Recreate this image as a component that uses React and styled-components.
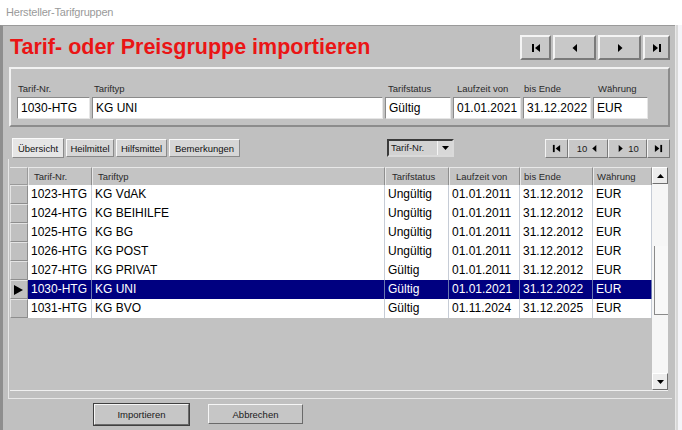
import React from "react";
import styled, { createGlobalStyle } from "styled-components";

const GlobalStyle = createGlobalStyle`
  html, body {
    margin: 0;
    padding: 0;
    background: #ffffff;
    font-family: "Liberation Sans", Arial, sans-serif;
  }
`;

const rows = [
  ["1023-HTG", "KG VdAK", "Ungültig", "01.01.2011", "31.12.2012", "EUR"],
  ["1024-HTG", "KG BEIHILFE", "Ungültig", "01.01.2011", "31.12.2012", "EUR"],
  ["1025-HTG", "KG BG", "Ungültig", "01.01.2011", "31.12.2012", "EUR"],
  ["1026-HTG", "KG POST", "Ungültig", "01.01.2011", "31.12.2012", "EUR"],
  ["1027-HTG", "KG PRIVAT", "Gültig", "01.01.2011", "31.12.2012", "EUR"],
  ["1030-HTG", "KG UNI", "Gültig", "01.01.2021", "31.12.2022", "EUR"],
  ["1031-HTG", "KG BVO", "Gültig", "01.11.2024", "31.12.2025", "EUR"],
];

const columns = [
  { title: "Tarif-Nr.", pad: 5 },
  { title: "Tariftyp", pad: 5 },
  { title: "Tarifstatus", pad: 6 },
  { title: "Laufzeit von", pad: 6 },
  { title: "bis Ende", pad: 3 },
  { title: "Währung", pad: 3 },
];

const header = [
  { label: "Tarif-Nr.", value: "1030-HTG", w: 73, lp: 1 },
  { label: "Tariftyp", value: "KG UNI", w: 291, lp: 2 },
  { label: "Tarifstatus", value: "Gültig", w: 66, lp: 3 },
  { label: "Laufzeit von", value: "01.01.2021", w: 68, lp: 4 },
  { label: "bis Ende", value: "31.12.2022", w: 68, lp: 1 },
  { label: "Währung", value: "EUR", w: 55, lp: 5 },
];

const gridCols = "18px 64px 293px 64px 71px 73px 59px";

const First = ({ s = 10 }) => (
  <svg width={s} height={s} viewBox="0 0 10 10">
    <rect x="1" y="1" width="2" height="8" fill="#000" />
    <polygon points="9,1 9,9 4,5" fill="#000" />
  </svg>
);
const Prev = ({ s = 10 }) => (
  <svg width={s} height={s} viewBox="0 0 10 10">
    <polygon points="7,1 7,9 2.5,5" fill="#000" />
  </svg>
);
const Next = ({ s = 10 }) => (
  <svg width={s} height={s} viewBox="0 0 10 10">
    <polygon points="3,1 3,9 7.5,5" fill="#000" />
  </svg>
);
const Last = ({ s = 10 }) => (
  <svg width={s} height={s} viewBox="0 0 10 10">
    <polygon points="1,1 1,9 6,5" fill="#000" />
    <rect x="7" y="1" width="2" height="8" fill="#000" />
  </svg>
);

export default function App() {
  return (
    <>
      <GlobalStyle />
      <TitleBar>Hersteller-Tarifgruppen</TitleBar>
      <Outer>
        <Frame>
          <HeaderRow>
            <BigTitle>Tarif- oder Preisgruppe importieren</BigTitle>
            <NavGroup>
              <NavButton $w={31}><First /></NavButton>
              <NavButton $w={43}><Prev /></NavButton>
              <NavButton $w={43}><Next /></NavButton>
              <NavButton $w={27}><Last /></NavButton>
            </NavGroup>
          </HeaderRow>

          <Panel>
            {header.map((f) => (
              <FieldCol key={f.label} $w={f.w}>
                <FieldLabel $lp={f.lp}>{f.label}</FieldLabel>
                <Field>{f.value}</Field>
              </FieldCol>
            ))}
          </Panel>

          <Toolbar>
            <Tabs>
              <Tab $active $w={52}>Übersicht</Tab>
              <Tab $w={48}>Heilmittel</Tab>
              <Tab $w={51}>Hilfsmittel</Tab>
              <Tab $w={71}>Bemerkungen</Tab>
            </Tabs>
            <Combo>
              <ComboText>Tarif-Nr.</ComboText>
              <ComboArrow>
                <svg width="7" height="4" viewBox="0 0 7 4">
                  <polygon points="0,0 7,0 3.5,4" fill="#000" />
                </svg>
              </ComboArrow>
            </Combo>
            <Pager>
              <PagerButton $w={23}><First s={9} /></PagerButton>
              <PagerButton $w={40}>
                <PagerNum>10</PagerNum>
                <Prev s={9} />
              </PagerButton>
              <PagerButton $w={39}>
                <Next s={9} />
                <PagerNum>10</PagerNum>
              </PagerButton>
              <PagerButton $w={23}><Last s={9} /></PagerButton>
            </Pager>
          </Toolbar>

          <TabPage>
            <Grid>
              <GridMain>
                <HeadRow>
                  <SelectorHead />
                  {columns.map((c) => (
                    <HeadCell key={c.title} $pad={c.pad}>
                      {c.title}
                    </HeadCell>
                  ))}
                </HeadRow>
                {rows.map((r) => {
                  const sel = r[0] === "1030-HTG";
                  return (
                    <DataRow key={r[0]} $sel={sel}>
                      <Selector>
                        {sel && (
                          <svg width="9" height="10" viewBox="0 0 9 10">
                            <polygon points="0,0 9,5 0,10" fill="#000" />
                          </svg>
                        )}
                      </Selector>
                      {r.map((v, i) => (
                        <Cell key={i} $sel={sel}>
                          {v}
                        </Cell>
                      ))}
                    </DataRow>
                  );
                })}
              </GridMain>
              <ScrollBar>
                <ScrollButton>
                  <svg width="7" height="4" viewBox="0 0 7 4">
                    <polygon points="0,4 7,4 3.5,0" fill="#000" />
                  </svg>
                </ScrollButton>
                <Track>
                  <Thumb />
                </Track>
                <ScrollButton>
                  <svg width="7" height="4" viewBox="0 0 7 4">
                    <polygon points="0,0 7,0 3.5,4" fill="#000" />
                  </svg>
                </ScrollButton>
              </ScrollBar>
            </Grid>
          </TabPage>

          <Footer>
            <Button $default>Importieren</Button>
            <Button>Abbrechen</Button>
          </Footer>
        </Frame>
        <Edge />
      </Outer>
    </>
  );
}

const TitleBar = styled.div`
  height: 25px;
  box-sizing: border-box;
  padding: 6px 0 0 6px;
  font-size: 11px;
  letter-spacing: -0.2px;
  color: #9a9a9a;
  background: #ffffff;
`;

const Outer = styled.div`
  display: flex;
  height: 405px;
`;

const Frame = styled.div`
  width: 675px;
  height: 405px;
  box-sizing: border-box;
  border-left: 3px solid #8e8e8e;
  border-top: 1px solid #9a9a9a;
  background: #c0c0c0;
  display: flex;
  flex-direction: column;
`;

const Edge = styled.div`
  flex: 1;
  border-left: 1px solid #e8e8e8;
  background: linear-gradient(90deg, #d8d8d8 0 2px, #f4f4f8 2px);
`;

const HeaderRow = styled.div`
  display: flex;
  justify-content: space-between;
  padding: 9px 5px 0 7px;
  height: 41px;
  box-sizing: border-box;
`;

const BigTitle = styled.h1`
  margin: 0;
  font-size: 21.5px;
  line-height: 25px;
  font-weight: bold;
  color: #ea1515;
`;

const NavGroup = styled.div`
  display: flex;
  gap: 2px;
  height: 25px;
`;

const NavButton = styled.div`
  width: ${(p) => p.$w}px;
  box-sizing: border-box;
  display: flex;
  align-items: center;
  justify-content: center;
  background: #c8c8c8;
  border: 2px solid;
  border-color: #f4f4f4 #7a7a7a #7a7a7a #f4f4f4;
`;

const Panel = styled.div`
  margin: 0 0 0 6px;
  width: 661px;
  height: 60px;
  box-sizing: border-box;
  display: flex;
  gap: 2px;
  padding: 14px 0 0 6px;
  border: 2px solid;
  border-color: #f2f2f2 #8c8c8c #8c8c8c #f2f2f2;
  background: #c2c2c2;
`;

const FieldCol = styled.div`
  width: ${(p) => p.$w}px;
  display: flex;
  flex-direction: column;
`;

const FieldLabel = styled.div`
  font-size: 9.5px;
  line-height: 12px;
  color: #2a2a2a;
  padding-left: ${(p) => p.$lp}px;
  height: 14px;
  white-space: nowrap;
`;

const Field = styled.div`
  height: 22px;
  box-sizing: border-box;
  padding: 0 3px;
  font-size: 12px;
  line-height: 20px;
  color: #000;
  background: #ffffff;
  border: 1px solid;
  border-color: #8a8a8a #e6e6e6 #e6e6e6 #8a8a8a;
`;

const Toolbar = styled.div`
  display: flex;
  align-items: flex-start;
  padding: 11px 0 0 9px;
  height: 32px;
  box-sizing: border-box;
`;

const Tabs = styled.div`
  display: flex;
  gap: 2px;
  width: 375px;
  align-items: flex-start;
`;

const Tab = styled.div`
  width: ${(p) => p.$w}px;
  height: ${(p) => (p.$active ? 20 : 18)}px;
  margin-top: ${(p) => (p.$active ? 0 : 1)}px;
  box-sizing: border-box;
  display: flex;
  align-items: center;
  justify-content: center;
  font-size: 9.5px;
  color: #111;
  white-space: nowrap;
  background: ${(p) => (p.$active ? "#e6e6e6" : "#d6d6d6")};
  border: 1px solid;
  border-color: #fafafa #8a8a8a #8a8a8a #fafafa;
`;

const Combo = styled.div`
  width: 67px;
  height: 18px;
  margin-top: 1px;
  box-sizing: border-box;
  display: flex;
  border: 2px solid;
  border-color: #3a3a3a #dadada #dadada #3a3a3a;
  background: #d2d2d2;
`;

const ComboText = styled.div`
  flex: 1;
  font-size: 9.5px;
  line-height: 14px;
  padding-left: 2px;
  color: #1a1a1a;
`;

const ComboArrow = styled.div`
  width: 14px;
  display: flex;
  align-items: center;
  justify-content: center;
  background: #d8d8d8;
  border-left: 1px solid #f4f4f4;
`;

const Pager = styled.div`
  display: flex;
  margin-left: 91px;
  height: 19px;
  margin-top: 1px;
`;

const PagerButton = styled.div`
  width: ${(p) => p.$w}px;
  box-sizing: border-box;
  display: flex;
  align-items: center;
  justify-content: center;
  gap: 3px;
  background: #c8c8c8;
  border: 1px solid;
  border-color: #f4f4f4 #7a7a7a #7a7a7a #f4f4f4;
`;

const PagerNum = styled.span`
  font-size: 9.5px;
  color: #1a1a1a;
`;

const TabPage = styled.div`
  margin-left: 5px;
  width: 664px;
  height: 240px;
  box-sizing: border-box;
  padding: 8px 0 0 1px;
  border-left: 1px solid #e8e8e8;
  border-bottom: 1px solid #e8e8e8;
`;

const Grid = styled.div`
  width: 658px;
  height: 223px;
  display: flex;
  border-bottom: 1px solid #f0f0f0;
  background: #c2c2c2;
`;

const GridMain = styled.div`
  width: 642px;
  display: flex;
  flex-direction: column;
`;

const HeadRow = styled.div`
  display: grid;
  grid-template-columns: ${gridCols};
  height: 18px;
`;

const SelectorHead = styled.div`
  background: #c0c0c0;
  border-right: 1px solid #9a9a9a;
  border-bottom: 1px solid #9a9a9a;
  border-top: 1px solid #e8e8e8;
`;

const HeadCell = styled.div`
  font-size: 9.5px;
  line-height: 17px;
  color: #2a2a2a;
  padding-left: ${(p) => p.$pad}px;
  white-space: nowrap;
  background: #c4c4c4;
  border-top: 1px solid #e8e8e8;
  border-left: 1px solid #e8e8e8;
  border-right: 1px solid #8e8e8e;
  box-sizing: border-box;
`;

const DataRow = styled.div`
  display: grid;
  grid-template-columns: ${gridCols};
  height: 19px;
  background: ${(p) => (p.$sel ? "#000080" : "#ffffff")};
`;

const Selector = styled.div`
  background: #c0c0c0;
  box-sizing: border-box;
  display: flex;
  align-items: center;
  padding-left: 3px;
  border-top: 1px solid #e4e4e4;
  border-left: 1px solid #e4e4e4;
  border-right: 1px solid #8e8e8e;
  border-bottom: 1px solid #8e8e8e;
`;

const Cell = styled.div`
  font-size: 12px;
  line-height: 19px;
  padding-left: 3px;
  white-space: nowrap;
  overflow: hidden;
  color: ${(p) => (p.$sel ? "#ffffff" : "#000000")};
  border-right: 1px solid ${(p) => (p.$sel ? "#6a78b0" : "#c6ccd6")};
`;

const ScrollBar = styled.div`
  width: 16px;
  display: flex;
  flex-direction: column;
  background: #f6f6f6;
`;

const ScrollButton = styled.div`
  height: 17px;
  box-sizing: border-box;
  display: flex;
  align-items: center;
  justify-content: center;
  background: #ececec;
  border: 1px solid;
  border-color: #ffffff #707070 #707070 #ffffff;
`;

const Track = styled.div`
  flex: 1;
  padding-top: 62px;
`;

const Thumb = styled.div`
  height: 68px;
  margin-left: 2px;
  border-left: 1px solid #8a8a8a;
  border-bottom: 1px solid #8a8a8a;
  background: #f8f8f8;
`;

const Footer = styled.div`
  display: flex;
  gap: 19px;
  padding: 5px 0 0 91px;
`;

const Button = styled.div`
  width: 95px;
  height: ${(p) => (p.$default ? 21 : 20)}px;
  box-sizing: border-box;
  display: flex;
  align-items: center;
  justify-content: center;
  font-size: 9.5px;
  color: #1a1a1a;
  background: #c6c6c6;
  border: 1px solid;
  border-color: #f6f6f6 #6a6a6a #6a6a6a #f6f6f6;
  outline: ${(p) => (p.$default ? "1px solid #404040" : "none")};
`;
